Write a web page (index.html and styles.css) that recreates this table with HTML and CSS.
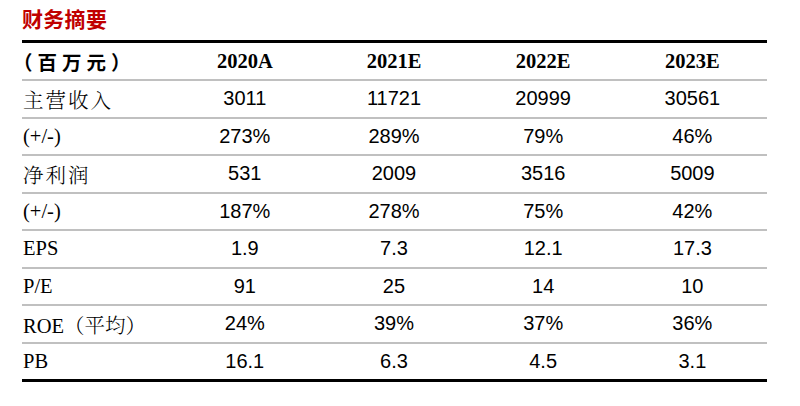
FILE: index.html
```html
<!DOCTYPE html>
<html lang="zh-CN">
<head>
<meta charset="utf-8">
<title>财务摘要</title>
<link rel="stylesheet" href="styles.css">
</head>
<body>
<div class="page">
  <h1 class="title">财务摘要</h1>
  <table class="fin">
    <colgroup>
      <col class="c-label"><col class="c-num"><col class="c-num"><col class="c-num"><col class="c-num">
    </colgroup>
    <thead>
      <tr>
        <th class="unit">（百万元）</th>
        <th>2020A</th>
        <th>2021E</th>
        <th>2022E</th>
        <th>2023E</th>
      </tr>
    </thead>
    <tbody>
      <tr><td class="lbl cn">主营收入</td><td>3011</td><td>11721</td><td>20999</td><td>30561</td></tr>
      <tr><td class="lbl">(+/-)</td><td>273%</td><td>289%</td><td>79%</td><td>46%</td></tr>
      <tr><td class="lbl cn">净利润</td><td>531</td><td>2009</td><td>3516</td><td>5009</td></tr>
      <tr><td class="lbl">(+/-)</td><td>187%</td><td>278%</td><td>75%</td><td>42%</td></tr>
      <tr><td class="lbl">EPS</td><td>1.9</td><td>7.3</td><td>12.1</td><td>17.3</td></tr>
      <tr><td class="lbl">P/E</td><td>91</td><td>25</td><td>14</td><td>10</td></tr>
      <tr><td class="lbl">ROE（平均）</td><td>24%</td><td>39%</td><td>37%</td><td>36%</td></tr>
      <tr class="last"><td class="lbl">PB</td><td>16.1</td><td>6.3</td><td>4.5</td><td>3.1</td></tr>
    </tbody>
  </table>
</div>
</body>
</html>
```
FILE: styles.css
```css
html, body {
  margin: 0;
  padding: 0;
  background: #ffffff;
}

.page {
  padding: 6px 0 0 22px;
  width: 745px;
}

.title {
  margin: 0;
  font-family: "Noto Sans CJK SC", "Liberation Sans", sans-serif;
  font-weight: 700;
  font-size: 21px;
  line-height: 24px;
  height: 34px;
  color: #c00000;
  letter-spacing: 0.3px;
}

.fin {
  width: 745px;
  border-collapse: collapse;
  table-layout: fixed;
  border-top: 3px solid #000;
}

.c-label { width: 148px; }
.c-num { width: 149px; }

.fin th,
.fin td {
  padding: 0;
  text-align: center;
  vertical-align: middle;
  border-bottom: 2px solid #c0c0c0;
}

.fin th {
  height: 36px;
  font-family: "Liberation Serif", serif;
  font-weight: 700;
  font-size: 20.5px;
  color: #000;
}

.fin th.unit {
  text-align: left;
  font-family: "Noto Sans CJK SC", sans-serif;
  font-weight: 700;
  font-size: 19.5px;
  letter-spacing: 5px;
  text-indent: -9px;
  white-space: nowrap;
}

.fin td {
  height: 35.5px;
  font-family: "Liberation Sans", sans-serif;
  font-size: 20px;
  color: #000;
}

.fin td.lbl {
  text-align: left;
  padding-left: 1px;
  font-family: "Liberation Serif", "Noto Serif CJK SC", "Noto Sans CJK SC", serif;
  font-weight: 300;
  font-size: 20.5px;
  white-space: nowrap;
}

.fin td.cn {
  letter-spacing: 2px;
}

.fin tr.last td {
  border-bottom: 3px solid #000;
}
```
